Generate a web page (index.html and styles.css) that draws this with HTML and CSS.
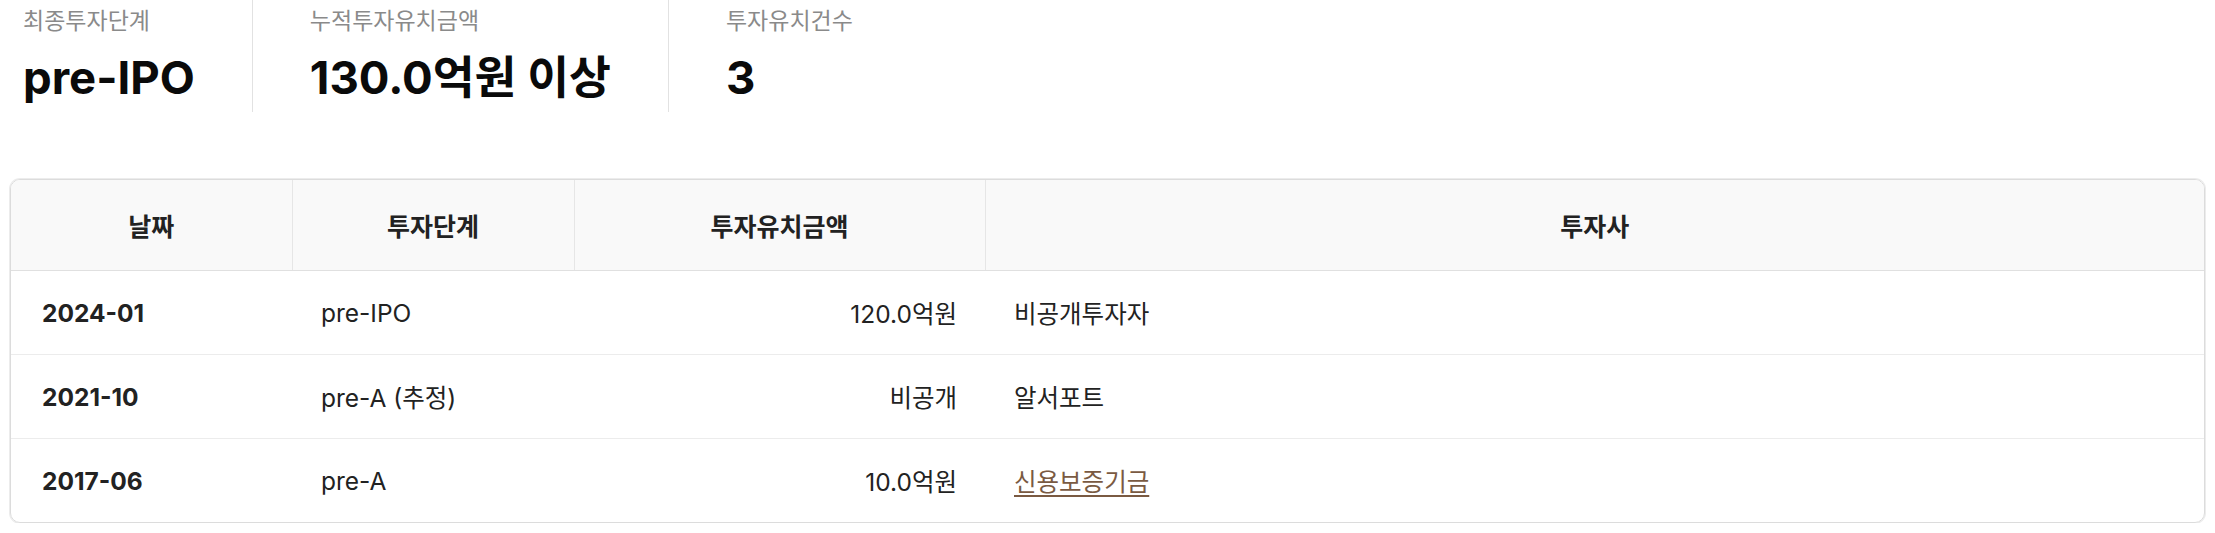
FILE: index.html
```html
<!DOCTYPE html>
<html lang="ko">
<head>
<meta charset="utf-8">
<title>투자유치 정보</title>
<link rel="stylesheet" href="styles.css">
</head>
<body>
<div class="page">
  <div class="stats">
    <div class="stat">
      <div class="stat-label">최종투자단계</div>
      <div class="stat-value">pre-IPO</div>
    </div>
    <div class="stat">
      <div class="stat-label">누적투자유치금액</div>
      <div class="stat-value">130.0억원 이상</div>
    </div>
    <div class="stat">
      <div class="stat-label">투자유치건수</div>
      <div class="stat-value">3</div>
    </div>
  </div>

  <div class="table-card">
    <table class="invest-table">
      <colgroup>
        <col class="col-date">
        <col class="col-stage">
        <col class="col-amount">
        <col class="col-investor">
      </colgroup>
      <thead>
        <tr>
          <th>날짜</th>
          <th>투자단계</th>
          <th>투자유치금액</th>
          <th>투자사</th>
        </tr>
      </thead>
      <tbody>
        <tr>
          <td class="date">2024-01</td>
          <td>pre-IPO</td>
          <td class="amount">120.0억원</td>
          <td>비공개투자자</td>
        </tr>
        <tr>
          <td class="date">2021-10</td>
          <td>pre-A (추정)</td>
          <td class="amount">비공개</td>
          <td>알서포트</td>
        </tr>
        <tr>
          <td class="date">2017-06</td>
          <td>pre-A</td>
          <td class="amount">10.0억원</td>
          <td><a class="investor-link" href="#">신용보증기금</a></td>
        </tr>
      </tbody>
    </table>
  </div>
</div>
</body>
</html>
```

FILE: styles.css
```css
html, body {
  margin: 0;
  padding: 0;
  background: #ffffff;
}

body {
  font-family: Inter, "Noto Sans CJK KR", sans-serif;
  color: #222222;
}

.page {
  padding: 0 10px 0 10px;
}

.stats {
  display: flex;
  align-items: stretch;
  padding-left: 13px;
}

.stat {
  padding: 5px 57px 6px 57px;
  border-left: 1px solid #e2e2e2;
}

.stat:first-child {
  padding-left: 0;
  border-left: none;
}

.stat-label {
  font-size: 23px;
  line-height: 32px;
  color: #8a8a8a;
  white-space: nowrap;
}

.stat-value {
  margin-top: 13px;
  font-size: 45.5px;
  line-height: 56px;
  font-weight: 700;
  color: #0a0a0a;
  white-space: nowrap;
}

.table-card {
  margin-top: 67px;
  border: 1px solid #dcdcdc;
  box-shadow: 0 0 0 1px #ececec;
  border-radius: 10px;
  overflow: hidden;
}

.invest-table {
  width: 100%;
  border-collapse: collapse;
  table-layout: fixed;
}

.col-date { width: 281px; }
.col-stage { width: 282px; }
.col-amount { width: 411px; }

.invest-table th {
  height: 90px;
  padding: 0;
  background: #f9f9f9;
  font-size: 25px;
  font-weight: 700;
  color: #222222;
  text-align: center;
  border-bottom: 1px solid #e0e0e0;
  border-left: 1px solid #e6e6e6;
}

.invest-table th:first-child {
  border-left: none;
}

.invest-table td {
  height: 83px;
  padding: 0 29px;
  font-size: 24.5px;
  color: #222222;
  border-top: 1px solid #ececec;
  vertical-align: middle;
  white-space: nowrap;
}

.invest-table tbody tr:first-child td {
  border-top: none;
}

.invest-table td.date {
  font-size: 24.5px;
  font-weight: 700;
  padding-left: 31px;
}

.invest-table td.amount {
  text-align: right;
  padding-right: 28px;
}

.investor-link {
  color: #7a5a42;
  text-decoration: underline;
  text-underline-offset: 4px;
}
```
